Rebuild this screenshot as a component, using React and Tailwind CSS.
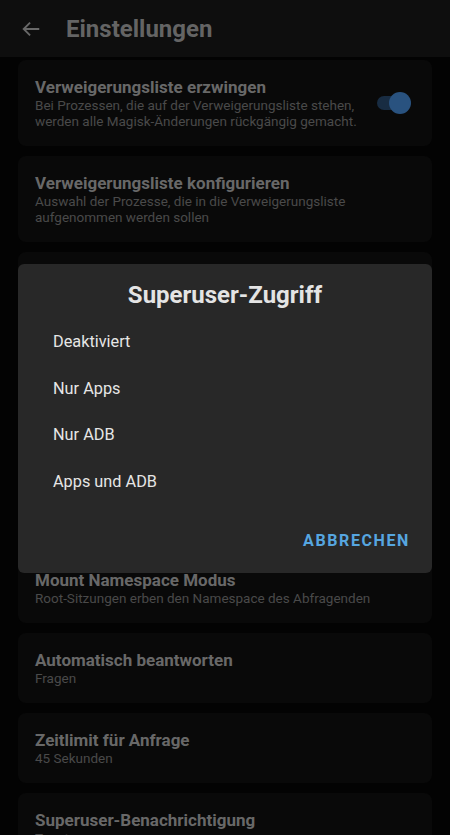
import React from 'react';

const font = { fontFamily: 'Roboto, "Noto Sans", sans-serif' };

const cardsTop = [
    { title: 'Verweigerungsliste erzwingen', sub: 'Bei Prozessen, die auf der Verweigerungsliste stehen, werden alle Magisk-Änderungen rückgängig gemacht.', toggle: true },
    { title: 'Verweigerungsliste konfigurieren', sub: 'Auswahl der Prozesse, die in die Verweigerungsliste aufgenommen werden sollen' },
];

const cardsBottom = [
    { title: 'Mount Namespace Modus', sub: 'Root-Sitzungen erben den Namespace des Abfragenden' },
    { title: 'Automatisch beantworten', sub: 'Fragen' },
    { title: 'Zeitlimit für Anfrage', sub: '45 Sekunden' },
    { title: 'Superuser-Benachrichtigung', sub: 'Toast' },
];

const options = ['Deaktiviert', 'Nur Apps', 'Nur ADB', 'Apps und ADB'];

function SettingCard({ title, sub, toggle }) {
    return (
        <div className="mx-[18px] mb-[10px] flex items-center rounded-lg bg-[#090909] pl-[17px] pr-[21px] py-[17px]">
            <div className="flex-1 min-w-0">
                <div className="text-[17px] leading-[20px] font-bold text-[#686868]">{title}</div>
                <div className="text-[13.5px] leading-[16px] text-[#4a4a4a]">{sub}</div>
            </div>
            {toggle && (
                <div className="relative ml-2 h-[22px] w-[34px] shrink-0">
                    <div className="absolute left-0 top-[4px] h-[14px] w-[30px] rounded-full bg-[#182c42]" />
                    <div className="absolute right-0 top-0 h-[22px] w-[22px] rounded-full bg-[#29527f]" />
                </div>
            )}
        </div>
    );
}

export default function App() {
    return (
        <div className="relative h-[835px] w-[450px] overflow-hidden bg-[#030303]" style={font}>
            <header className="flex h-[57px] items-center bg-[#0e0e0e] pl-[20px]">
                <svg width="22" height="22" viewBox="0 0 24 24" fill="none" stroke="#686868" strokeWidth="2">
                    <path d="M21 12H4M11 5l-7 7 7 7" />
                </svg>
                <h1 className="ml-[24px] text-[24px] font-bold text-[#646464]">Einstellungen</h1>
            </header>

            <div className="pt-[3px]">
                {cardsTop.map(c => <SettingCard key={c.title} {...c} />)}
                <div className="mx-[18px] mb-[10px] h-[86px] rounded-lg bg-[#090909]" />
                <div className="mx-[18px] mb-[10px] h-[70px] rounded-lg bg-[#090909]" />
                <div className="mx-[18px] mb-[10px] h-[115px] rounded-lg bg-[#090909]" />
                {cardsBottom.map(c => <SettingCard key={c.title} {...c} />)}
            </div>

            {/* dialog */}
            <div className="absolute left-[18px] top-[264px] h-[309px] w-[414px] rounded-md bg-[#282828] flex flex-col">
                <div className="pt-[16px] text-center text-[24px] leading-[30px] font-bold text-[#e4e4e4]">Superuser-Zugriff</div>
                <div className="mt-[9px] flex flex-col">
                    {options.map(o => (
                        <div key={o} className="flex h-[46.5px] items-center pl-[35px] text-[16.3px] text-[#e6e6e6]">{o}</div>
                    ))}
                </div>
                <div className="mt-auto flex justify-end pb-[20px] pr-[22px]">
                    <span className="text-[16px] font-bold tracking-[1.6px] text-[#56a6e0]">ABBRECHEN</span>
                </div>
            </div>
        </div>
    );
}
